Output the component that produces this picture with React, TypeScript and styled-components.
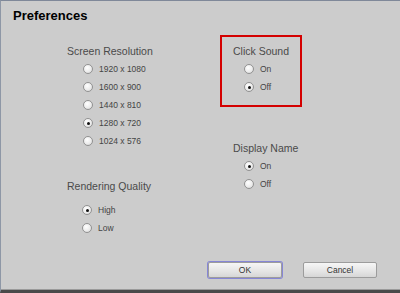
import React from "react";
import styled, { createGlobalStyle } from "styled-components";

const GlobalStyle = createGlobalStyle`
  html, body {
    margin: 0;
    padding: 0;
    background: #cccccc;
  }
  * {
    box-sizing: border-box;
  }
`;

interface OptionGroup {
  title: string;
  options: string[];
  selected: number;
}

const resolutions: OptionGroup = {
  title: "Screen Resolution",
  options: ["1920 x 1080", "1600 x 900", "1440 x 810", "1280 x 720", "1024 x 576"],
  selected: 3,
};

const quality: OptionGroup = {
  title: "Rendering Quality",
  options: ["High", "Low"],
  selected: 0,
};

const clickSound: OptionGroup = {
  title: "Click Sound",
  options: ["On", "Off"],
  selected: 1,
};

const displayName: OptionGroup = {
  title: "Display Name",
  options: ["On", "Off"],
  selected: 0,
};

const Section: React.FC<{ group: OptionGroup; indent: number; top?: number; gap?: number }> = ({
  group,
  indent,
  top = 0,
  gap = 2,
}) => (
  <SectionBox $top={top}>
    <Heading>{group.title}</Heading>
    <OptionList $indent={indent} $gap={gap}>
      {group.options.map((label, i) => (
        <OptionRow key={label}>
          <Radio $checked={i === group.selected} />
          <OptionLabel>{label}</OptionLabel>
        </OptionRow>
      ))}
    </OptionList>
  </SectionBox>
);

const App: React.FC = () => {
  return (
    <>
      <GlobalStyle />
      <Window>
        <Title>Preferences</Title>
        <Body>
          <LeftColumn>
            <Section group={resolutions} indent={16} top={9} />
            <Section group={quality} indent={15} top={29} gap={8} />
          </LeftColumn>
          <RightColumn>
            <Highlight>
              <Section group={clickSound} indent={11} />
            </Highlight>
            <Plain>
              <Section group={displayName} indent={11} top={34} />
            </Plain>
          </RightColumn>
        </Body>
        <Footer>
          <Button $focused>OK</Button>
          <Button>Cancel</Button>
        </Footer>
      </Window>
    </>
  );
};

export default App;

const Window = styled.div`
  width: 400px;
  height: 293px;
  display: flex;
  flex-direction: column;
  background: #cccccc;
  border-top: 1px solid #7f8899;
  border-left: 1px solid #8e97a6;
  border-bottom: 3px solid #4a4a4a;
  box-shadow: inset 0 -1px 0 #9a9a9a;
  font-family: "Liberation Sans", Arial, sans-serif;
`;

const Title = styled.div`
  padding: 7px 0 0 12px;
  height: 24px;
  font-size: 13px;
  line-height: 16px;
  font-weight: bold;
  color: #000;
`;

const Body = styled.div`
  flex: 1;
  display: grid;
  grid-template-columns: 219px 82px;
  margin-top: 10px;
`;

const LeftColumn = styled.div`
  display: flex;
  flex-direction: column;
  padding-left: 66px;
`;

const RightColumn = styled.div`
  display: flex;
  flex-direction: column;
`;

const Highlight = styled.div`
  height: 72px;
  border: 2px solid #d40000;
  padding: 7px 0 0 11px;
`;

const Plain = styled.div`
  padding-left: 13px;
`;

const SectionBox = styled.div<{ $top: number }>`
  margin-top: ${(p) => p.$top}px;
`;

const Heading = styled.div`
  font-size: 10.5px;
  line-height: 14px;
  color: #4a4a4a;
  white-space: nowrap;
`;

const OptionList = styled.div<{ $indent: number; $gap: number }>`
  display: flex;
  flex-direction: column;
  margin-top: ${(p) => p.$gap}px;
  padding-left: ${(p) => p.$indent}px;
`;

const OptionRow = styled.div`
  display: flex;
  align-items: center;
  gap: 6px;
  height: 18px;
`;

const Radio = styled.span<{ $checked?: boolean }>`
  position: relative;
  width: 10px;
  height: 10px;
  flex: none;
  border-radius: 50%;
  border: 1px solid #929292;
  background: radial-gradient(circle at 40% 35%, #ffffff 0%, #ececec 55%, #cfcfcf 100%);
  &::after {
    content: "";
    display: ${(p) => (p.$checked ? "block" : "none")};
    position: absolute;
    left: 2.5px;
    top: 2.5px;
    width: 3px;
    height: 3px;
    border-radius: 50%;
    background: #111;
  }
`;

const OptionLabel = styled.span`
  font-size: 8.5px;
  line-height: 12px;
  color: #444;
  white-space: nowrap;
`;

const Footer = styled.div`
  display: flex;
  justify-content: flex-end;
  gap: 21px;
  padding: 0 23px 12px 0;
`;

const Button = styled.button<{ $focused?: boolean }>`
  width: 74px;
  height: 16px;
  padding: 0;
  border: 1px solid #9c9c9c;
  border-radius: 2px;
  background: linear-gradient(#f6f6f6, #e4e4e4 60%, #d6d6d6);
  font-family: "Liberation Sans", Arial, sans-serif;
  font-size: 8.5px;
  color: #333;
  box-shadow: ${(p) => (p.$focused ? "0 0 0 1px #8686d6" : "none")};
`;
